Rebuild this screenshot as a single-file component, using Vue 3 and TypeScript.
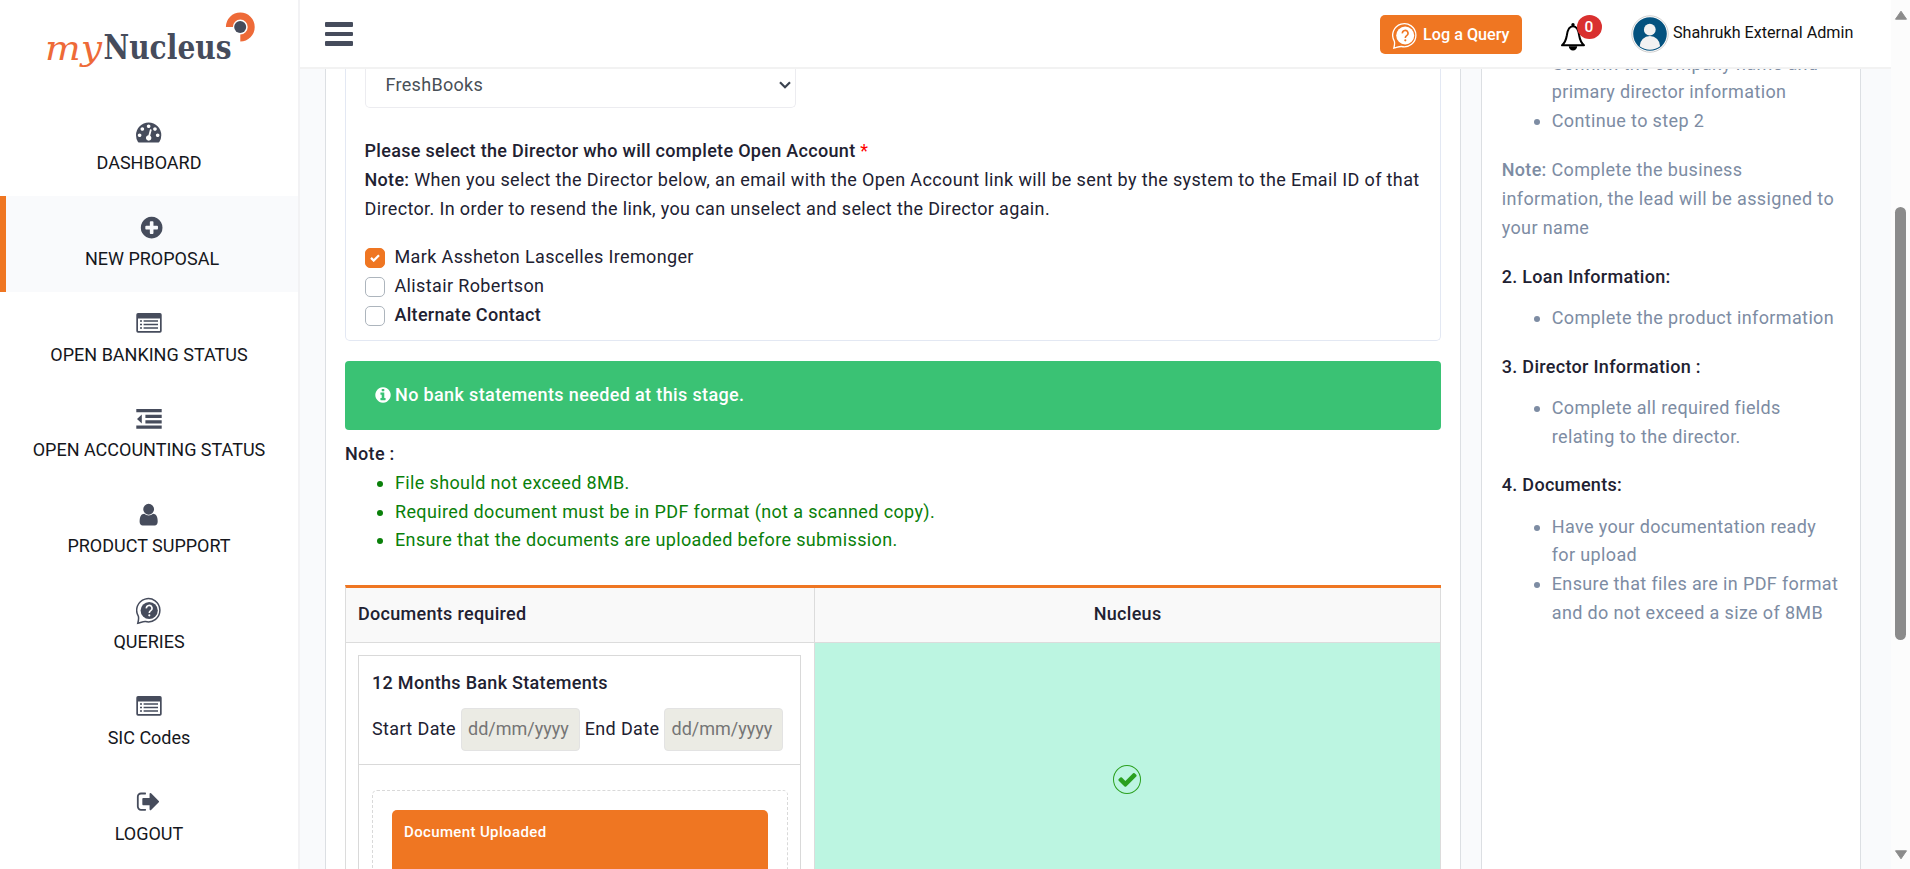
<script setup lang="ts">
interface NavItem {
  label: string
  icon: string
  active?: boolean
}

const nav: NavItem[] = [
  { label: 'DASHBOARD', icon: 'gauge' },
  { label: 'NEW PROPOSAL', icon: 'plus', active: true },
  { label: 'OPEN BANKING STATUS', icon: 'list' },
  { label: 'OPEN ACCOUNTING STATUS', icon: 'outdent' },
  { label: 'PRODUCT SUPPORT', icon: 'user' },
  { label: 'QUERIES', icon: 'query' },
  { label: 'SIC Codes', icon: 'list' },
  { label: 'LOGOUT', icon: 'logout' },
]

const paths: Record<string, string> = {
  gauge:
    'M384 1152q0-53-37.5-90.5t-90.5-37.5-90.5 37.5-37.5 90.5 37.5 90.5 90.5 37.5 90.5-37.5 37.5-90.5zm192-448q0-53-37.5-90.5t-90.5-37.5-90.5 37.5-37.5 90.5 37.5 90.5 90.5 37.5 90.5-37.5 37.5-90.5zm428 481l101-382q6-26-7.5-48.5t-38.5-29.5-48 6.5-30 39.5l-101 382q-60 5-107 43.5t-63 98.5q-20 77 20 146t117 89 146-20 89-117q16-60-6-117t-72-91zm660-33q0-53-37.5-90.5t-90.5-37.5-90.5 37.5-37.5 90.5 37.5 90.5 90.5 37.5 90.5-37.5 37.5-90.5zm-640-640q0-53-37.5-90.5t-90.5-37.5-90.5 37.5-37.5 90.5 37.5 90.5 90.5 37.5 90.5-37.5 37.5-90.5zm448 192q0-53-37.5-90.5t-90.5-37.5-90.5 37.5-37.5 90.5 37.5 90.5 90.5 37.5 90.5-37.5 37.5-90.5zm320 448q0 261-141 483-19 29-54 29h-1402q-35 0-54-29-141-221-141-483 0-182 71-348t191-286 286-191 348-71 348 71 286 191 191 286 71 348z',
  plus: 'M1344 960v-128q0-26-19-45t-45-19h-256v-256q0-26-19-45t-45-19h-128q-26 0-45 19t-19 45v256h-256q-26 0-45 19t-19 45v128q0 26 19 45t45 19h256v256q0 26 19 45t45 19h128q26 0 45-19t19-45v-256h256q26 0 45-19t19-45zm320-64q0 209-103 385.5t-279.5 279.5-385.5 103-385.5-103-279.5-279.5-103-385.5 103-385.5 279.5-279.5 385.5-103 385.5 103 279.5 279.5 103 385.5z',
  user: 'M1536 1399q0 109-62.5 187t-150.5 78h-854q-88 0-150.5-78t-62.5-187q0-85 8.5-160.5t31.5-152 58.5-131 94-89 134.5-34.5q131 128 313 128t313-128q76 0 134.5 34.5t94 89 58.5 131 31.5 152 8.5 160.5zm-256-887q0 159-112.5 271.5t-271.5 112.5-271.5-112.5-112.5-271.5 112.5-271.5 271.5-112.5 271.5 112.5 112.5 271.5z',
  logout:
    'M704 1440q0 4 1 20t.5 26.5-3 23.5-10 19.5-20.5 6.5h-320q-119 0-203.5-84.5t-84.5-203.5v-704q0-119 84.5-203.5t203.5-84.5h320q13 0 22.5 9.5t9.5 22.5q0 4 1 20t.5 26.5-3 23.5-10 19.5-20.5 6.5h-320q-66 0-113 47t-47 113v704q0 66 47 113t113 47h312l11.5 1 11.5 3 8 5.5 7 9 2 13.5zm928-544q0 26-19 45l-544 544q-19 19-45 19t-45-19-19-45v-288h-448q-26 0-45-19t-19-45v-384q0-26 19-45t45-19h448v-288q0-26 19-45t45-19 45 19l544 544q19 19 19 45z',
}

const directors = [
  { name: 'Mark Assheton Lascelles Iremonger', checked: true, bold: false },
  { name: 'Alistair Robertson', checked: false, bold: false },
  { name: 'Alternate Contact', checked: false, bold: true },
]

const fileNotes = [
  'File should not exceed 8MB.',
  'Required document must be in PDF format (not a scanned copy).',
  'Ensure that the documents are uploaded before submission.',
]

const steps = [
  { title: '2. Loan Information:', items: ['Complete the product information'] },
  { title: '3. Director Information :', items: ['Complete all required fields relating to the director.'] },
  {
    title: '4. Documents:',
    items: ['Have your documentation ready for upload', 'Ensure that files are in PDF format and do not exceed a size of 8MB'],
  },
]
</script>

<template>
  <div class="app">
    <aside class="sidebar">
      <div class="logo">
        <svg width="220" height="70" viewBox="40 0 220 70">
          <text class="logo-my" x="45" y="59.5" textLength="57" lengthAdjust="spacingAndGlyphs">my</text>
          <text class="logo-name" x="103.5" y="59.3" textLength="128" lengthAdjust="spacingAndGlyphs">Nucleus</text>
          <path d="M229.4 27 A10.9 10.9 0 1 1 240.3 37.9" fill="none" stroke="#ee6a38" stroke-width="7" />
          <circle cx="240.2" cy="27" r="6" fill="#464c5c" />
        </svg>
      </div>
      <nav class="nav">
        <a v-for="item in nav" :key="item.label" class="nav-item" :class="{ active: item.active }">
          <span class="nav-icon">
            <svg v-if="item.icon === 'list'" width="26" height="20" viewBox="0 0 26 20">
              <path
                fill-rule="evenodd"
                d="M2 0H24a1.7 1.7 0 0 1 1.7 1.7V18a1.7 1.7 0 0 1-1.7 1.7H2A1.7 1.7 0 0 1 .3 18V1.7A1.7 1.7 0 0 1 2 0ZM2 5.6V17.4a.6.6 0 0 0 .6.6H23.4a.6.6 0 0 0 .6-.6V5.6Z"
              />
              <path d="M4 7.3h2v1.5H4zM7.6 7.3H22v1.5H7.6zM4 10.8h2v1.5H4zM7.6 10.8H22v1.5H7.6zM4 14.3h2v1.5H4zM7.6 14.3H22v1.5H7.6z" />
            </svg>
            <svg v-else-if="item.icon === 'outdent'" width="26" height="20" viewBox="0 0 26 20">
              <path d="M.3 0H25.7V3.2H.3zM9.4 5.8H25.7V9H9.4zM9.4 11.2H25.7V14.4H9.4zM.3 16.6H25.7V19.8H.3zM5.8 5.6V14.6L1 10.1z" />
            </svg>
            <svg v-else-if="item.icon === 'query'" class="query-icon" width="26" height="28" viewBox="0 0 26 28">
              <path
                d="M1.8 26.2C2.6 23.5 2.9 21.8 2.4 19.3A11.6 11.6 0 1 1 9.5 24.5C7 24.3 4.5 25.6 1.8 26.2Z"
                fill="none"
                stroke="#464c5c"
                stroke-width="1.5"
              />
              <circle cx="13.2" cy="13.5" r="8.6" />
              <path d="M10.4 11.4a2.8 2.8 0 1 1 4.3 2.2c-1 .7-1.4 1.2-1.4 2.4" fill="none" stroke="#fff" stroke-width="1.6" />
              <circle cx="13.3" cy="18.3" r="1.1" fill="#fff" />
            </svg>
            <svg v-else width="25.3" height="25.3" viewBox="0 0 1792 1792"><path :d="paths[item.icon]" /></svg>
          </span>
          <span class="nav-label">{{ item.label }}</span>
        </a>
      </nav>
    </aside>

    <div class="page">
      <header class="topbar">
        <div class="burger"><i /><i /><i /></div>
        <div class="topbar-right">
          <button class="log-btn">
            <svg width="26" height="28" viewBox="0 0 26 28">
              <path
                d="M1.8 26.2C2.6 23.5 2.9 21.8 2.4 19.3A11.6 11.6 0 1 1 9.5 24.5C7 24.3 4.5 25.6 1.8 26.2Z"
                fill="none"
                stroke="#fff"
                stroke-width="1.3"
              />
              <circle cx="13.2" cy="13.5" r="9" fill="#fff" />
              <path d="M10.4 11.4a2.8 2.8 0 1 1 4.3 2.2c-1 .7-1.4 1.2-1.4 2.4" fill="none" stroke="#ef7622" stroke-width="1.6" />
              <circle cx="13.3" cy="18.3" r="1.1" fill="#ef7622" />
            </svg>
            <span>Log a Query</span>
          </button>
          <div class="bell">
            <svg width="26" height="29" viewBox="0 0 26 29">
              <path
                d="M2 23.3H24C20.8 20.5 20 18.5 19.2 13.5C18.4 7.5 16.5 4.3 13 4.3S7.6 7.5 6.8 13.5C6 18.5 5.2 20.5 2 23.3Z"
                fill="none"
                stroke="#000"
                stroke-width="2"
                stroke-linejoin="round"
              />
              <circle cx="13" cy="2.7" r="1.7" />
              <path d="M8.8 24.3h8.4a4.2 4.2 0 0 1-8.4 0Z" />
            </svg>
            <span class="badge">0</span>
          </div>
          <div class="user">
            <svg width="38" height="38" viewBox="0 0 38 38">
              <circle cx="19" cy="19" r="18.2" fill="#fff" stroke="#cfcfcf" stroke-width="1" />
              <circle cx="19" cy="19" r="16.8" fill="#04527f" />
              <circle cx="18.8" cy="14.7" r="5.9" fill="#f2f2f2" />
              <path d="M8.7 31.3a10.2 10.2 0 0 1 20.4 0 16.8 16.8 0 0 1-20.4 0Z" fill="#f2f2f2" />
            </svg>
            <span>Shahrukh External Admin</span>
          </div>
        </div>
      </header>

      <div class="content">
        <main class="card main-card">
          <section class="group">
            <div class="select">
              <span>FreshBooks</span>
              <svg width="12" height="8" viewBox="0 0 12 8"><path d="M1 1.2l5 5 5-5" fill="none" stroke="#3b4350" stroke-width="2.2" /></svg>
            </div>
            <div class="director-note">
              <b>Please select the Director who will complete Open Account</b> <span class="req">*</span><br />
              <b>Note:</b> When you select the Director below, an email with the Open Account link will be sent by the system to the
              Email ID of that Director. In order to resend the link, you can unselect and select the Director again.
            </div>
            <div class="directors">
              <label v-for="d in directors" :key="d.name" class="director" :class="{ bold: d.bold }">
                <span class="box" :class="{ on: d.checked }">
                  <svg v-if="d.checked" width="10" height="8" viewBox="0 0 10 8"><path d="M1 3.9l2.7 2.7L9 1.3" fill="none" stroke="#fff" stroke-width="2.2" /></svg>
                </span>
                <span>{{ d.name }}</span>
              </label>
            </div>
          </section>

          <div class="alert">
            <svg width="18" height="18" viewBox="0 0 1792 1792">
              <path
                fill="#fff"
                d="M1152 1376v-160q0-14-9-23t-23-9h-96v-512q0-14-9-23t-23-9h-320q-14 0-23 9t-9 23v160q0 14 9 23t23 9h96v320h-96q-14 0-23 9t-9 23v160q0 14 9 23t23 9h448q14 0 23-9t9-23zm-128-896v-160q0-14-9-23t-23-9h-192q-14 0-23 9t-9 23v160q0 14 9 23t23 9h192q14 0 23-9t9-23zm640 416q0 209-103 385.5t-279.5 279.5-385.5 103-385.5-103-279.5-279.5-103-385.5 103-385.5 279.5-279.5 385.5-103 385.5 103 279.5 279.5 103 385.5z"
              />
            </svg>
            <span>No bank statements needed at this stage.</span>
          </div>

          <div class="note-title">Note :</div>
          <ul class="file-notes">
            <li v-for="n in fileNotes" :key="n">{{ n }}</li>
          </ul>

          <div class="docs">
            <div class="th">Documents required</div>
            <div class="th center">Nucleus</div>
            <div class="td">
              <div class="doc">
                <div class="doc-head">
                  <div class="doc-title">12 Months Bank Statements</div>
                  <div class="dates">
                    <span>Start Date</span><input class="date" placeholder="dd/mm/yyyy" disabled />
                    <span>End Date</span><input class="date" placeholder="dd/mm/yyyy" disabled />
                  </div>
                </div>
                <div class="doc-body">
                  <div class="drop"><div class="uploaded">Document Uploaded</div></div>
                </div>
              </div>
            </div>
            <div class="td ok">
              <span class="tick">
                <svg width="21" height="21" viewBox="0 0 1792 1792">
                  <path
                    fill="#2ba01f"
                    d="M1671 566q0 40-28 68l-724 724-136 136q-28 28-68 28t-68-28l-136-136-362-362q-28-28-28-68t28-68l136-136q28-28 68-28t68 28l294 295 656-657q28-28 68-28t68 28l136 136q28 28 28 68z"
                  />
                </svg>
              </span>
            </div>
          </div>
        </main>

        <aside class="card help">
          <ul>
            <li>Confirm the company name and primary director information</li>
            <li>Continue to step 2</li>
          </ul>
          <p><b>Note:</b> Complete the business information, the lead will be assigned to your name</p>
          <template v-for="s in steps" :key="s.title">
            <h4>{{ s.title }}</h4>
            <ul>
              <li v-for="i in s.items" :key="i">{{ i }}</li>
            </ul>
          </template>
        </aside>
      </div>
    </div>

    <div class="scrollbar">
      <svg width="14" height="11" viewBox="0 0 14 11"><path d="M7 1.2L12.5 9.2H1.5Z" fill="#8b8b8b" stroke="#8b8b8b" stroke-linejoin="round" /></svg>
      <div class="thumb" />
      <svg class="down" width="14" height="11" viewBox="0 0 14 11"><path d="M7 9.8L12.5 1.8H1.5Z" fill="#8b8b8b" stroke="#8b8b8b" stroke-linejoin="round" /></svg>
    </div>
  </div>
</template>

<style>
body {
  overflow: hidden;
}
</style>

<style scoped>
* {
  box-sizing: border-box;
}
.app {
  display: flex;
  width: 1910px;
  height: 869px;
  overflow: hidden;
  font-family: Roboto, 'Liberation Sans', sans-serif;
  font-size: 18px;
  line-height: 28.8px;
  color: #212131;
  background: #f9fafc;
}
svg {
  display: block;
  flex: none;
}
b {
  font-weight: 500;
  letter-spacing: 0.31px;
}
.sidebar {
  flex: none;
  width: 300px;
  background: #fff;
  border-right: 2px solid #f2f2f4;
}
.logo {
  height: 100px;
  padding-left: 40px;
}
.logo-my {
  font: italic 33.5px 'DejaVu Serif', serif;
  fill: #ee6a38;
}
.logo-name {
  font: bold 33px 'DejaVu Serif', serif;
  fill: #464c5c;
}
.nav-item {
  display: flex;
  flex-direction: column;
  align-items: center;
  height: 95.8px;
  padding-top: 18px;
}
.nav-item.active {
  background: #f9fafc;
  border-left: 6px solid #ef7622;
}
.nav-icon {
  display: flex;
  align-items: center;
  justify-content: center;
  height: 27px;
}
.nav-icon svg {
  fill: #464c5c;
}
.nav-icon .query-icon {
  margin-top: 2px;
}
.nav-label {
  margin-top: 4px;
  color: #15171c;
}
.page {
  flex: none;
  width: 1591px;
  display: flex;
  flex-direction: column;
}
.topbar {
  flex: none;
  display: flex;
  justify-content: space-between;
  height: 69px;
  padding: 0 37px 0 25px;
  background: #fff;
  border-bottom: 2px solid #f2f2f2;
}
.burger {
  display: flex;
  flex-direction: column;
  gap: 5px;
  padding-top: 22px;
}
.burger i {
  width: 28px;
  height: 4.6px;
  border-radius: 1px;
  background: #464c5c;
}
.topbar-right {
  display: flex;
  align-items: flex-start;
  padding-top: 15px;
}
.log-btn {
  display: flex;
  align-items: center;
  gap: 5px;
  width: 142px;
  height: 39px;
  padding: 0 0 0 12px;
  border: 0;
  border-radius: 5px;
  background: #ef7622;
  color: #fff;
  font: 500 16.2px Roboto, sans-serif;
  white-space: nowrap;
}
.log-btn svg {
  margin-top: 3px;
}
.bell {
  position: relative;
  margin: 7px 0 0 38px;
  width: 26px;
}
.badge {
  position: absolute;
  left: 16.5px;
  top: -7px;
  width: 25px;
  height: 24px;
  border-radius: 50%;
  background: #d9302f;
  color: #fff;
  font-size: 15.5px;
  font-weight: 500;
  line-height: 24px;
  text-align: center;
}
.user {
  display: flex;
  gap: 4px;
  width: 223px;
  margin-left: 45px;
  font-size: 16.15px;
  line-height: 35px;
  color: #111;
  white-space: nowrap;
}
.content {
  flex: 1;
  min-height: 0;
  display: flex;
  gap: 20px;
  padding: 0 30px 0 25px;
  overflow: hidden;
  letter-spacing: 0.365px;
}
.card {
  background: #fff;
  border: 1px solid #dcdfe3;
  border-width: 0 1px;
}
.main-card {
  width: 1137px;
  padding: 0 19px;
}
.group {
  height: 272px;
  padding: 0 18.5px;
  border: 1px solid #e3e8f3;
  border-top: 0;
  border-radius: 0 0 5px 5px;
}
.select {
  display: flex;
  align-items: center;
  justify-content: space-between;
  width: 431px;
  height: 39px;
  padding: 0 4px 6px 20px;
  border: 1px solid #ececf0;
  border-top: 0;
  border-radius: 0 0 5px 5px;
  color: #495057;
  letter-spacing: 0.3px;
}
.director-note {
  margin-top: 29px;
}
.req {
  color: #f00;
}
.directors {
  margin-top: 20.1px;
}
.director {
  display: flex;
  align-items: center;
  gap: 10px;
  height: 28.8px;
}
.director.bold {
  font-weight: 500;
  letter-spacing: 0.3px;
}
.box {
  display: flex;
  align-items: center;
  justify-content: center;
  width: 20px;
  height: 20px;
  margin-top: 1px;
  border: 1px solid #adb5bd;
  border-radius: 5px;
}
.box.on {
  background: #ef7622;
  border-color: #ef7622;
}
.alert {
  display: flex;
  align-items: center;
  gap: 3px;
  height: 69px;
  margin-top: 20px;
  padding-left: 29px;
  border-radius: 4px;
  background: #3ac274;
  color: #fff;
  font-weight: 500;
}
.alert svg {
  margin-top: -1px;
}
.note-title {
  margin-top: 10px;
  font-weight: 500;
  letter-spacing: 0.3px;
}
ul {
  margin: 0;
}
.file-notes {
  padding-left: 50px;
  color: #0a800a;
}
.docs {
  display: grid;
  grid-template-columns: 469px 1fr;
  margin-top: 30px;
  border-top: 3px solid #ef7622;
  border-left: 1px solid #dcdcdc;
}
.th {
  height: 55px;
  padding: 12px 12px;
  background: #f9f9f9;
  border: 1px solid #dcdcdc;
  border-width: 0 1px 1px 0;
  font-weight: 500;
  letter-spacing: 0.3px;
}
.center {
  text-align: center;
}
.td {
  height: 300px;
  padding: 12px 13px 0 12px;
  border-right: 1px solid #dcdcdc;
}
.ok {
  display: flex;
  justify-content: center;
  padding-top: 122px;
  background: #bcf5e1;
}
.tick {
  display: flex;
  align-items: center;
  justify-content: center;
  width: 28px;
  height: 29px;
  border: 1px solid #2ba01f;
  border-radius: 50%;
}
.doc {
  width: 443px;
  height: 288px;
  border: 1px solid #d9d9d9;
}
.doc-head {
  height: 109px;
  padding: 13px 13px 0;
  border-bottom: 1px solid #d9d9d9;
}
.doc-title {
  font-weight: 500;
  letter-spacing: 0.3px;
}
.dates {
  display: flex;
  align-items: center;
  justify-content: space-between;
  width: 411px;
  margin-top: 10px;
}
.date {
  width: 118.5px;
  height: 43px;
  padding: 0 6px 2px;
  border: 1px solid #e3e3e3;
  border-radius: 4px;
  background: #ebebe4;
  font: 18px Roboto, sans-serif;
}
.date::placeholder {
  color: #757575;
}
.doc-body {
  padding: 25px 12px 0 13px;
}
.drop {
  height: 160px;
  padding: 19px;
  border: 1px dashed #d9d9d9;
  border-radius: 5px;
}
.uploaded {
  height: 130px;
  padding: 8px 12px;
  border-radius: 5px;
  background: #ef7622;
  color: #fff;
  font-size: 15px;
  font-weight: 500;
}
.help {
  width: 380px;
  padding: 0 20px 0 19.5px;
  color: #7d8ca3;
}
.help ul {
  padding-left: 50px;
}
.help ul:first-child {
  margin-top: -19.5px;
}
.help p {
  margin: 20.3px 0;
}
.help h4 {
  margin: 19.3px 0 12.8px;
  font-size: 18px;
  font-weight: 500;
  letter-spacing: 0.3px;
  color: #212131;
}
.scrollbar {
  flex: none;
  width: 19px;
  display: flex;
  flex-direction: column;
  align-items: center;
  padding: 10px 0 9px;
  background: #fcfcfc;
}
.thumb {
  width: 11px;
  height: 433px;
  margin-top: 186px;
  border-radius: 6px;
  background: #8b8b8b;
}
.down {
  margin-top: auto;
}
</style>
